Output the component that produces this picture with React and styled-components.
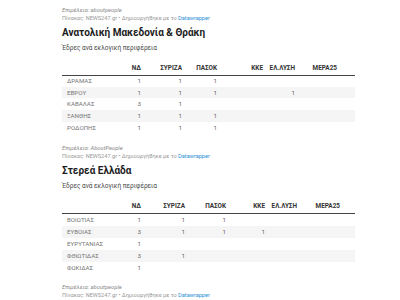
import React from "react";
import styled, { createGlobalStyle } from "styled-components";

const Global = createGlobalStyle`
  html, body { margin: 0; padding: 0; background: #fff; }
  body { font-family: Roboto, "Noto Sans", Arial, sans-serif; }
`;

const Page = styled.div`
  width: 400px;
  padding: 6px 0 0 62px;
  box-sizing: border-box;
  display: flex;
  flex-direction: column;
`;

const Notes = styled.div`
  display: flex;
  flex-direction: column;
  margin-top: ${(p) => p.$mt || 0}px;
`;

const Credit = styled.div`
  font-size: 5.8px;
  line-height: 8px;
  font-style: italic;
  color: #8a8a8a;
`;

const Source = styled.div`
  font-size: 5.6px;
  line-height: 8px;
  color: #999;
  a { color: #2d8fd5; text-decoration: none; }
`;

const Title = styled.div`
  margin-top: 4px;
  font-size: 10px;
  line-height: 14px;
  font-weight: 700;
  color: #1c1c1c;
`;

const Subtitle = styled.div`
  margin-top: 3px;
  font-size: 6.5px;
  line-height: 10px;
  color: #4a4a4a;
`;

const Table = styled.table`
  margin-top: 8px;
  width: 293px;
  table-layout: fixed;
  border-collapse: collapse;
`;

const Th = styled.th`
  height: 14px;
  padding: 0;
  font-size: 6.4px;
  font-weight: 700;
  color: #333;
  text-align: right;
  border-bottom: 1.5px solid #444;
  padding-right: ${(p) => p.$pr || 0}px;
  box-sizing: border-box;
  white-space: nowrap;
`;

const Tr = styled.tr`
  height: ${(p) => p.$h}px;
  background: ${(p) => (p.$shade ? "#f5f5f5" : "#fff")};
`;

const Label = styled.td`
  padding: 0 0 0 5px;
  font-size: 6.2px;
  color: #777;
  text-align: left;
  white-space: nowrap;
`;

const Num = styled.td`
  padding: 0;
  padding-right: ${(p) => p.$pr || 0}px;
  font-size: 6.2px;
  color: #666;
  text-align: right;
`;

const parties = ["ΝΔ", "ΣΥΡΙΖΑ", "ΠΑΣΟΚ", "ΚΚΕ", "ΕΛ.ΛΥΣΗ", "ΜΕΡΑ25"];

const charts = [
  {
    title: "Ανατολική Μακεδονία & Θράκη",
    credit: "Επιμέλεια: AboutPeople",
    widths: [53, 26, 41, 35, 46, 32, 60],
    lastPad: 18,
    rowH: 11.7,
    rows: [
      ["ΔΡΑΜΑΣ", "1", "1", "1", "", "", ""],
      ["ΕΒΡΟΥ", "1", "1", "1", "", "1", ""],
      ["ΚΑΒΑΛΑΣ", "3", "1", "", "", "", ""],
      ["ΞΑΝΘΗΣ", "1", "1", "1", "", "", ""],
      ["ΡΟΔΟΠΗΣ", "1", "1", "1", "", "", ""],
    ],
  },
  {
    title: "Στερεά Ελλάδα",
    credit: "Επιμέλεια: aboutpeople",
    widths: [53, 26, 44, 41, 39, 32, 58],
    lastPad: 15,
    rowH: 12.2,
    rows: [
      ["ΒΟΙΩΤΙΑΣ", "1", "1", "1", "", "", ""],
      ["ΕΥΒΟΙΑΣ", "3", "1", "1", "1", "", ""],
      ["ΕΥΡΥΤΑΝΙΑΣ", "1", "", "", "", "", ""],
      ["ΦΘΙΩΤΙΔΑΣ", "3", "1", "", "", "", ""],
      ["ΦΩΚΙΔΑΣ", "1", "", "", "", "", ""],
    ],
  },
];

function ChartNotes({ credit, mt }) {
  return (
    <Notes $mt={mt}>
      <Credit>{credit}</Credit>
      <Source>
        Πίνακας: NEWS247.gr • Δημιουργήθηκε με το <a href="#">Datawrapper</a>
      </Source>
    </Notes>
  );
}

function Chart({ chart }) {
  return (
    <>
      <Title>{chart.title}</Title>
      <Subtitle>Έδρες ανά εκλογική περιφέρεια</Subtitle>
      <Table>
        <colgroup>
          {chart.widths.map((w, i) => (
            <col key={i} style={{ width: w }} />
          ))}
        </colgroup>
        <thead>
          <tr>
            <Th />
            {parties.map((p, i) => (
              <Th key={p} $pr={i === parties.length - 1 ? chart.lastPad : 0}>
                {p}
              </Th>
            ))}
          </tr>
        </thead>
        <tbody>
          {chart.rows.map((r, ri) => (
            <Tr key={r[0]} $h={chart.rowH} $shade={ri % 2 === 1}>
              <Label>{r[0]}</Label>
              {r.slice(1).map((v, ci) => (
                <Num key={ci} $pr={ci === 5 ? chart.lastPad : 0}>
                  {v}
                </Num>
              ))}
            </Tr>
          ))}
        </tbody>
      </Table>
    </>
  );
}

export default function App() {
  return (
    <>
      <Global />
      <Page>
        <ChartNotes credit="Επιμέλεια: aboutpeople" />
        <Chart chart={charts[0]} />
        <ChartNotes credit={charts[0].credit} mt={11} />
        <Chart chart={charts[1]} />
        <ChartNotes credit={charts[1].credit} mt={9} />
      </Page>
    </>
  );
}
